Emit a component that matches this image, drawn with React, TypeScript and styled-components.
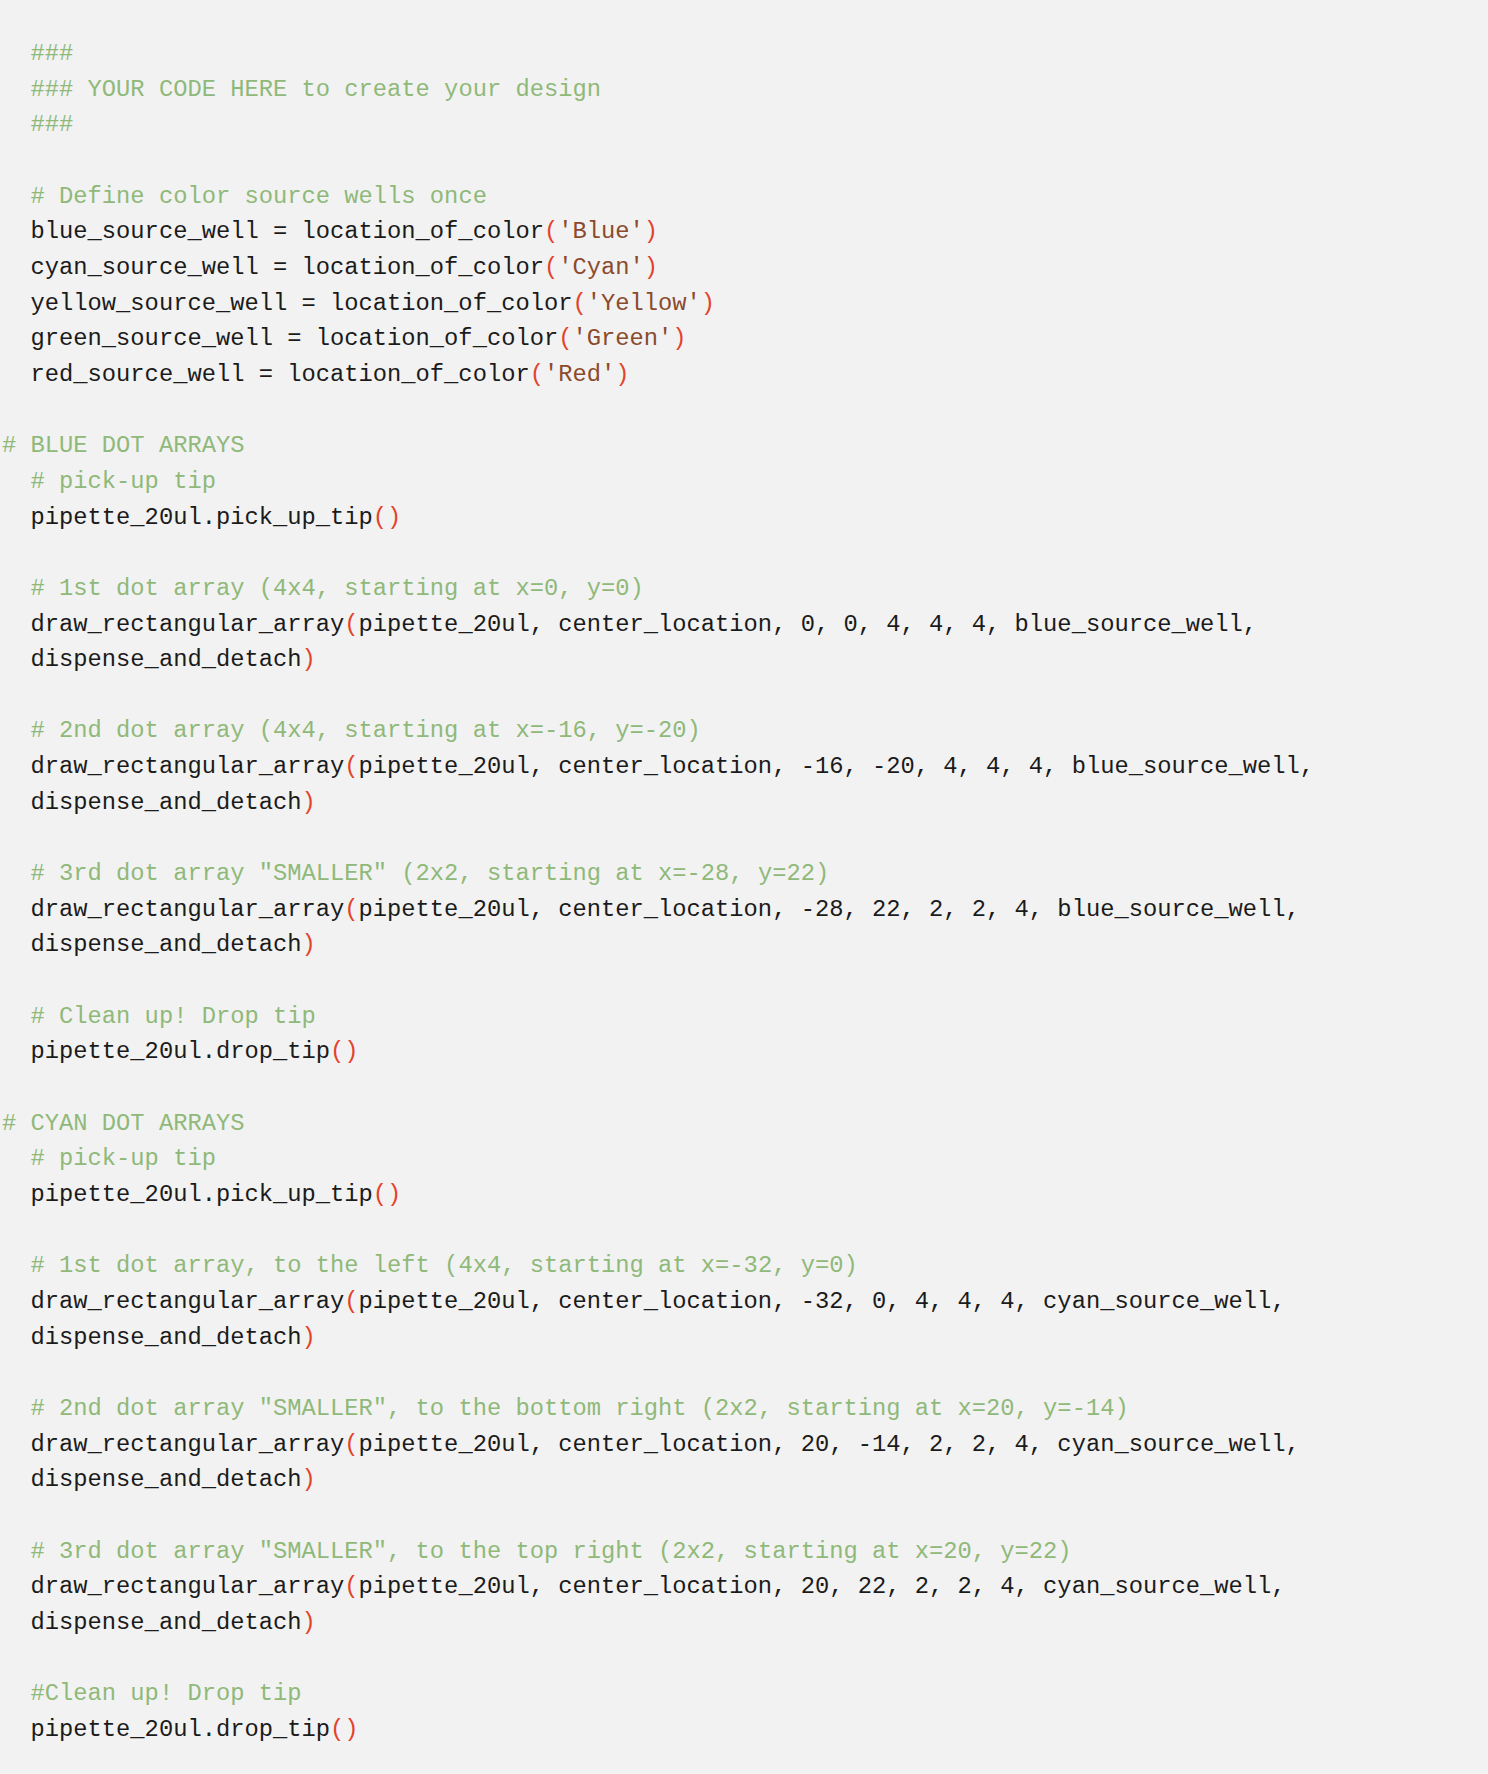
import React from "react";
import styled, { createGlobalStyle } from "styled-components";

const GlobalStyle = createGlobalStyle`
  html, body {
    margin: 0;
    padding: 0;
    background: #f2f2f2;
  }
  #root {
    min-height: 1774px;
    background: #f2f2f2;
  }
`;

const CodeBlock = styled.pre`
  margin: 0;
  padding: 36px 0 0 2px;
  font-family: "Liberation Mono", "Courier New", monospace;
  font-size: 23.78px;
  line-height: 35.66px;
  color: #1b1b1b;
  background: #f2f2f2;
  white-space: pre;
`;

const Line = styled.div`
  height: 35.66px;
`;

const Comment = styled.span`
  color: #8fb979;
`;

const Str = styled.span`
  color: #8b4a2b;
`;

const Paren = styled.span`
  color: #e2432b;
`;

const source = `  ###
  ### YOUR CODE HERE to create your design
  ###

  # Define color source wells once
  blue_source_well = location_of_color('Blue')
  cyan_source_well = location_of_color('Cyan')
  yellow_source_well = location_of_color('Yellow')
  green_source_well = location_of_color('Green')
  red_source_well = location_of_color('Red')

# BLUE DOT ARRAYS
  # pick-up tip
  pipette_20ul.pick_up_tip()

  # 1st dot array (4x4, starting at x=0, y=0)
  draw_rectangular_array(pipette_20ul, center_location, 0, 0, 4, 4, 4, blue_source_well,
  dispense_and_detach)

  # 2nd dot array (4x4, starting at x=-16, y=-20)
  draw_rectangular_array(pipette_20ul, center_location, -16, -20, 4, 4, 4, blue_source_well,
  dispense_and_detach)

  # 3rd dot array "SMALLER" (2x2, starting at x=-28, y=22)
  draw_rectangular_array(pipette_20ul, center_location, -28, 22, 2, 2, 4, blue_source_well,
  dispense_and_detach)

  # Clean up! Drop tip
  pipette_20ul.drop_tip()

# CYAN DOT ARRAYS
  # pick-up tip
  pipette_20ul.pick_up_tip()

  # 1st dot array, to the left (4x4, starting at x=-32, y=0)
  draw_rectangular_array(pipette_20ul, center_location, -32, 0, 4, 4, 4, cyan_source_well,
  dispense_and_detach)

  # 2nd dot array "SMALLER", to the bottom right (2x2, starting at x=20, y=-14)
  draw_rectangular_array(pipette_20ul, center_location, 20, -14, 2, 2, 4, cyan_source_well,
  dispense_and_detach)

  # 3rd dot array "SMALLER", to the top right (2x2, starting at x=20, y=22)
  draw_rectangular_array(pipette_20ul, center_location, 20, 22, 2, 2, 4, cyan_source_well,
  dispense_and_detach)

  #Clean up! Drop tip
  pipette_20ul.drop_tip()`;

function renderLine(line: string, idx: number) {
  const trimmed = line.trimStart();
  if (trimmed.startsWith("#")) {
    const indent = line.slice(0, line.length - trimmed.length);
    return (
      <Line key={idx}>
        {indent}
        <Comment>{trimmed}</Comment>
      </Line>
    );
  }
  const parts = line.split(/('[^']*'|[()])/);
  return (
    <Line key={idx}>
      {parts.map((p, i) => {
        if (p === "") return null;
        if (p === "(" || p === ")") return <Paren key={i}>{p}</Paren>;
        if (p.startsWith("'")) return <Str key={i}>{p}</Str>;
        return <React.Fragment key={i}>{p}</React.Fragment>;
      })}
    </Line>
  );
}

export default function App() {
  const lines = source.split("\n");
  return (
    <>
      <GlobalStyle />
      <CodeBlock>{lines.map((l, i) => renderLine(l, i))}</CodeBlock>
    </>
  );
}
